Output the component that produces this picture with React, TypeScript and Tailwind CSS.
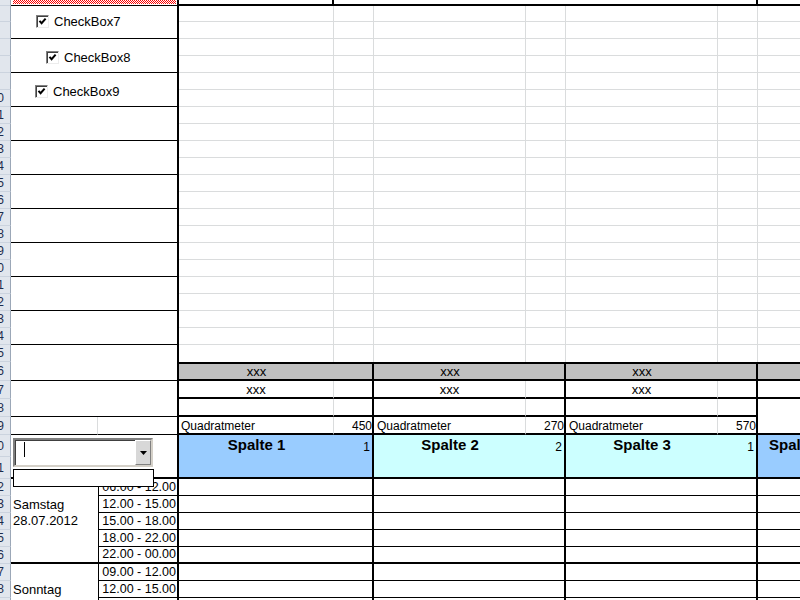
import type { ReactNode } from "react";

const blocks = [
  { title: "Spalte 1", n: "1", qm: "450", head: "bg-[#99ccff]" },
  { title: "Spalte 2", n: "2", qm: "270", head: "bg-[#ccffff]" },
  { title: "Spalte 3", n: "1", qm: "570", head: "bg-[#ccffff]" },
];

const saturday = ["06.00 - 12.00", "12.00 - 15.00", "15.00 - 18.00", "18.00 - 22.00", "22.00 - 00.00"];
const sunday = ["09.00 - 12.00", "12.00 - 15.00", "15.00 - 18.00"];

const RowHead = ({ n }: { n?: number }) => (
  <div className="flex items-center justify-end overflow-hidden whitespace-nowrap border-r border-b border-r-[#9ba7b7] border-b-[#cbd3de] bg-[#e1e6ed] pr-[6px] text-[12px] leading-none text-[#1d2c4c]">
    {n}
  </div>
);

const CheckCell = ({ label, pad }: { label: string; pad: string }) => (
  <div className={`col-span-2 row-span-2 flex items-center border-r-2 border-b border-black ${pad}`}>
    <span className="flex h-[13px] w-[13px] shrink-0 items-center justify-center border border-t-[#808080] border-l-[#808080] border-r-[#ececec] border-b-[#ececec] bg-white shadow-[inset_1px_1px_0_#404040]">
      <svg width="9" height="9" viewBox="0 0 9 9">
        <path d="M1.5 3.8 3.6 6.2 7.6 1.6" fill="none" stroke="#000" strokeWidth="2" />
      </svg>
    </span>
    <span className="ml-[5px] text-[13px] leading-none">{label}</span>
  </div>
);

const BlankMain = ({ last }: { last?: boolean }) => (
  <>
    {Array.from({ length: 8 }).map((_, i) => (
      <div key={i} className={last ? "border-r border-[#dadcdd]" : "border-r border-b border-[#dadcdd]"} />
    ))}
  </>
);

const ComboBox = () => (
  <>
    <div className="absolute left-[2px] top-[3px] z-10 flex h-[29px] w-[140px] border-2 border-t-[#808080] border-l-[#808080] border-r-[#d4d0c8] border-b-[#d4d0c8] bg-white shadow-[inset_1px_1px_0_#404040]">
      <div className="flex-1 pl-[9px] pt-[2px]">
        <div className="h-[15px] w-px bg-black" />
      </div>
      <div className="flex w-[16px] items-center justify-center border border-t-white border-l-white border-r-[#808080] border-b-[#808080] bg-[#d8d8d8]">
        <svg width="7" height="4" viewBox="0 0 7 4">
          <path d="M0 0h7L3.5 4z" fill="#000" />
        </svg>
      </div>
    </div>
    <div className="absolute left-[2px] top-[34px] z-10 h-[18px] w-[141px] border border-black bg-white" />
  </>
);

const TimeCell = ({ t, end }: { t: string; end?: boolean }) => (
  <div
    className={
      end
        ? "flex items-end justify-end whitespace-nowrap border-l border-b-2 border-r-2 border-black pr-[1px] text-[12.5px] leading-[15px]"
        : "flex items-end justify-end whitespace-nowrap border-l border-b border-r-2 border-black pr-[1px] text-[12.5px] leading-[15px]"
    }
  >
    {t}
  </div>
);

const DataBlocks = ({ end }: { end?: boolean }) => (
  <>
    {Array.from({ length: 4 }).map((_, i) => (
      <div
        key={i}
        className={end ? "col-span-2 border-r-2 border-b-2 border-black" : "col-span-2 border-r-2 border-b border-black"}
      />
    ))}
  </>
);

export default function App() {
  const cells: ReactNode[] = [];

  // row 4 (cut at the top)
  cells.push(
    <RowHead key="h4" />,
    <div key="l4" className="col-span-2 border-r-2 border-b border-black">
      <div className="ml-[2px] mr-[1px] h-[4px] bg-[image:repeating-conic-gradient(#ff0000_0_25%,#ffffff_0_50%)] bg-[length:2px_2px]" />
    </div>,
    <div key="m4a" className="border-r-2 border-b-2 border-black" />,
    <div key="m4b" className="col-span-5 border-r-2 border-b-2 border-black" />,
    <div key="m4c" className="col-span-2 border-b-2 border-black" />,
  );

  // rows 5 - 25
  for (let n = 5; n <= 25; n++) {
    cells.push(<RowHead key={`h${n}`} n={n >= 10 ? n : undefined} />);
    if (n === 5) cells.push(<CheckCell key="cb7" label="CheckBox7" pad="pl-[25px] pb-[2px]" />);
    else if (n === 7) cells.push(<CheckCell key="cb8" label="CheckBox8" pad="pl-[35px] pt-[3px]" />);
    else if (n === 9) cells.push(<CheckCell key="cb9" label="CheckBox9" pad="pl-[24px] pt-[3px]" />);
    else if (n % 2 === 1)
      cells.push(<div key={`l${n}`} className="col-span-2 row-span-2 border-r-2 border-b border-black" />);
    cells.push(<BlankMain key={`m${n}`} last={n === 25} />);
  }

  // row 26: grey band
  cells.push(<RowHead key="h26" n={26} />);
  blocks.forEach((b) => {
    cells.push(
      <div key={`g1${b.title}`} className="flex items-center justify-center border-t-2 border-b-2 border-black bg-[#c0c0c0] text-[13px] leading-none">
        xxx
      </div>,
      <div key={`g2${b.title}`} className="border-t-2 border-r-2 border-b-2 border-black bg-[#c0c0c0]" />,
    );
  });
  cells.push(
    <div key="g4a" className="border-t-2 border-b-2 border-black bg-[#c0c0c0]" />,
    <div key="g4b" className="border-t-2 border-b-2 border-black bg-[#c0c0c0]" />,
  );

  // row 27
  cells.push(
    <RowHead key="h27" n={27} />,
    <div key="l27" className="col-span-2 row-span-2 border-r-2 border-b border-black" />,
  );
  blocks.forEach((b) => {
    cells.push(
      <div key={`x1${b.title}`} className="flex items-center justify-center border-r border-b-2 border-r-[#dadcdd] border-b-black text-[13px] leading-none">
        xxx
      </div>,
      <div key={`x2${b.title}`} className="border-r-2 border-b-2 border-black" />,
    );
  });
  cells.push(
    <div key="x4a" className="border-r border-b-2 border-r-[#dadcdd] border-b-black" />,
    <div key="x4b" className="border-r border-b-2 border-r-[#dadcdd] border-b-black" />,
  );

  // row 28
  cells.push(<RowHead key="h28" n={28} />);
  blocks.forEach((b) => {
    cells.push(
      <div key={`e1${b.title}`} className="border-r border-b-2 border-r-[#dadcdd] border-b-black" />,
      <div key={`e2${b.title}`} className="border-r-2 border-b-2 border-black" />,
    );
  });
  cells.push(
    <div key="e4a" className="border-r border-[#dadcdd]" />,
    <div key="e4b" className="border-r border-[#dadcdd]" />,
  );

  // row 29: Quadratmeter
  cells.push(
    <RowHead key="h29" n={29} />,
    <div key="l29a" className="border-r border-b border-r-[#dadcdd] border-b-black" />,
    <div key="l29b" className="border-r-2 border-b border-black" />,
  );
  blocks.forEach((b, i) => {
    cells.push(
      <div
        key={`q1${b.title}`}
        className={
          i === 0
            ? "flex items-end whitespace-nowrap border-r border-b-2 border-r-[#dadcdd] border-b-black pl-[2px] text-[12px] leading-[14px]"
            : "flex items-end whitespace-nowrap border-r border-b-2 border-r-[#dadcdd] border-b-black pl-[3px] text-[12px] leading-[14px]"
        }
      >
        Quadratmeter
      </div>,
      <div key={`q2${b.title}`} className="flex items-end justify-end border-r-2 border-b-2 border-black text-[12px] leading-[14px]">
        {b.qm}
      </div>,
    );
  });
  cells.push(
    <div key="q4a" className="border-b-2 border-black" />,
    <div key="q4b" className="border-b-2 border-black" />,
  );

  // rows 30 - 31: headers
  cells.push(
    <RowHead key="h30" n={30} />,
    <div key="l30" className="relative col-span-2 row-span-2 border-r-2 border-b-2 border-black">
      <ComboBox />
    </div>,
  );
  blocks.forEach((b) => {
    cells.push(
      <div key={`s1${b.title}`} className={`row-span-2 border-b-2 border-black pt-[1px] text-center text-[15px] font-bold leading-[18px] ${b.head}`}>
        {b.title}
      </div>,
      <div key={`s2${b.title}`} className={`row-span-2 border-r-2 border-b-2 border-black pt-[5px] pr-[2px] text-right text-[12px] leading-[14px] ${b.head}`}>
        {b.n}
      </div>,
    );
  });
  cells.push(
    <div key="s4a" className="row-span-2 whitespace-nowrap border-b-2 border-black bg-[#99ccff] pl-[11px] pt-[1px] text-[15px] font-bold leading-[18px]">
      Spalte 4
    </div>,
    <div key="s4b" className="row-span-2 border-b-2 border-black bg-[#99ccff] pt-[5px] pr-[2px] text-right text-[12px] leading-[14px]">
      1
    </div>,
  );
  cells.push(<RowHead key="h31" n={31} />);

  // rows 32 - 36: Samstag
  saturday.forEach((t, i) => {
    const n = 32 + i;
    cells.push(<RowHead key={`h${n}`} n={n} />);
    if (i === 0)
      cells.push(
        <div key="sat" className="row-span-5 border-b-2 border-black pl-[2px] pt-[18px] text-[13px] leading-[16px]">
          <div>Samstag</div>
          <div>28.07.2012</div>
        </div>,
      );
    cells.push(<TimeCell key={`t${n}`} t={t} end={i === 4} />, <DataBlocks key={`d${n}`} end={i === 4} />);
  });

  // rows 37 - 39: Sonntag
  sunday.forEach((t, i) => {
    const n = 37 + i;
    cells.push(<RowHead key={`h${n}`} n={n} />);
    if (i === 0)
      cells.push(
        <div key="sun" className="row-span-3 pl-[2px] pt-[18px] text-[13px] leading-[16px]">
          <div>Sonntag</div>
          <div>29.07.2012</div>
        </div>,
      );
    cells.push(<TimeCell key={`t${n}`} t={t} />, <DataBlocks key={`d${n}`} />);
  });

  return (
    <div className="h-[600px] w-[800px] overflow-hidden bg-white font-['Liberation_Sans',Arial,sans-serif] text-black">
      <div className="grid w-[950px] grid-cols-[11px_87px_81px_155px_40px_152px_40px_152px_40px_152px_40px] grid-rows-[6px_16px_repeat(20,17px)_19px_18px_18px_18px_22px_22px_repeat(8,17px)]">
        {cells}
      </div>
    </div>
  );
}
